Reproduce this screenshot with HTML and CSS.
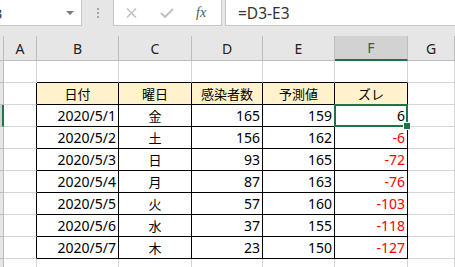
FILE: index.html
```html
<!DOCTYPE html>
<html lang="ja">
<head>
  <meta charset="UTF-8">
  <meta name="viewport" content="width=device-width, initial-scale=1.0">
  <title>感染者数の予測</title>
  <link rel="stylesheet" href="styles.css">
</head>
<body>
  <div class="fbar">
    <div class="namebox">
      <span class="name">F3</span>
      <svg class="drop" width="8" height="4" viewBox="0 0 8 4"><path d="M0 0h8L4 4z" fill="#7a7a7a"/></svg>
    </div>
    <div class="grip">
      <svg width="2" height="10" viewBox="0 0 2 10"><rect y="0" width="2" height="2" fill="#a6a6a6"/><rect y="4" width="2" height="2" fill="#a6a6a6"/><rect y="8" width="2" height="2" fill="#a6a6a6"/></svg>
    </div>
    <div class="btns">
      <svg class="ico" width="11" height="10" viewBox="0 0 11 10"><path d="M1 0.5l9 9M10 0.5l-9 9" stroke="#c2c2c2" stroke-width="1.6" fill="none"/></svg>
      <svg class="ico" width="14" height="10" viewBox="0 0 14 10"><path d="M1 5l4 4 8-8" stroke="#c2c2c2" stroke-width="2" fill="none"/></svg>
      <span class="fx">fx</span>
    </div>
    <div class="formula">=D3-E3</div>
  </div>

  <div class="sheet">
    <div class="row hdr">
      <div class="rh"></div>
      <div class="ch">A</div>
      <div class="ch">B</div>
      <div class="ch">C</div>
      <div class="ch">D</div>
      <div class="ch">E</div>
      <div class="ch on">F</div>
      <div class="ch">G</div>
    </div>

    <div class="row">
      <div class="rh"></div>
      <div class="c"></div>
      <div class="c tt"></div>
      <div class="c tt"></div>
      <div class="c tt"></div>
      <div class="c tt"></div>
      <div class="c tt"></div>
      <div class="c"></div>
    </div>

    <div class="row">
      <div class="rh"></div>
      <div class="c tl"></div>
      <div class="c t th">日付</div>
      <div class="c t th">曜日</div>
      <div class="c t th">感染者数</div>
      <div class="c t th">予測値</div>
      <div class="c t th">ズレ</div>
      <div class="c"></div>
    </div>

    <div class="row">
      <div class="rh on"></div>
      <div class="c tl"></div>
      <div class="c t num">2020/5/1</div>
      <div class="c t jp">金</div>
      <div class="c t num">165</div>
      <div class="c t num">159</div>
      <div class="c t num sel">6</div>
      <div class="c"></div>
    </div>

    <div class="row">
      <div class="rh"></div>
      <div class="c tl"></div>
      <div class="c t num">2020/5/2</div>
      <div class="c t jp">土</div>
      <div class="c t num">156</div>
      <div class="c t num">162</div>
      <div class="c t num neg">-6</div>
      <div class="c"></div>
    </div>

    <div class="row">
      <div class="rh"></div>
      <div class="c tl"></div>
      <div class="c t num">2020/5/3</div>
      <div class="c t jp">日</div>
      <div class="c t num">93</div>
      <div class="c t num">165</div>
      <div class="c t num neg">-72</div>
      <div class="c"></div>
    </div>

    <div class="row">
      <div class="rh"></div>
      <div class="c tl"></div>
      <div class="c t num">2020/5/4</div>
      <div class="c t jp">月</div>
      <div class="c t num">87</div>
      <div class="c t num">163</div>
      <div class="c t num neg">-76</div>
      <div class="c"></div>
    </div>

    <div class="row">
      <div class="rh"></div>
      <div class="c tl"></div>
      <div class="c t num">2020/5/5</div>
      <div class="c t jp">火</div>
      <div class="c t num">57</div>
      <div class="c t num">160</div>
      <div class="c t num neg">-103</div>
      <div class="c"></div>
    </div>

    <div class="row">
      <div class="rh"></div>
      <div class="c tl"></div>
      <div class="c t num">2020/5/6</div>
      <div class="c t jp">水</div>
      <div class="c t num">37</div>
      <div class="c t num">155</div>
      <div class="c t num neg">-118</div>
      <div class="c"></div>
    </div>

    <div class="row">
      <div class="rh"></div>
      <div class="c tl"></div>
      <div class="c t num">2020/5/7</div>
      <div class="c t jp">木</div>
      <div class="c t num">23</div>
      <div class="c t num">150</div>
      <div class="c t num neg">-127</div>
      <div class="c"></div>
    </div>

    <div class="row">
      <div class="rh"></div>
      <div class="c"></div>
      <div class="c"></div>
      <div class="c"></div>
      <div class="c"></div>
      <div class="c"></div>
      <div class="c"></div>
      <div class="c"></div>
    </div>
  </div>
</body>
</html>
```

FILE: styles.css
```css
body {
  margin: 0;
  width: 455px;
  height: 267px;
  overflow: hidden;
  background: #fff;
  font-family: "Noto Sans", "Noto Sans CJK JP", sans-serif;
  color: #000;
}

/* formula bar */
.fbar {
  display: flex;
  align-items: flex-start;
  height: 36px;
  background: #e6e6e6;
}

.namebox {
  box-sizing: border-box;
  width: 82px;
  height: 26px;
  background: #fff;
  border-right: 1px solid #c6c6c6;
  border-bottom: 1px solid #c6c6c6;
  display: flex;
  align-items: center;
  overflow: hidden;
}

.name {
  margin-left: -14px;
  font-size: 15px;
  color: #333;
}

.drop {
  margin-left: auto;
  margin-right: 7px;
}

.grip {
  width: 31px;
  height: 26px;
  display: flex;
  align-items: center;
  justify-content: center;
  padding-left: 1px;
  box-sizing: border-box;
}

.btns {
  box-sizing: border-box;
  width: 109px;
  height: 26px;
  background: #fff;
  border-left: 1px solid #c6c6c6;
  border-right: 1px solid #c6c6c6;
  border-bottom: 1px solid #c6c6c6;
  display: flex;
  align-items: center;
  padding-left: 12px;
  gap: 23px;
}

.fx {
  font-family: "Liberation Serif", serif;
  font-style: italic;
  font-size: 14px;
  color: #555;
  margin-left: -1px;
}

.formula {
  box-sizing: border-box;
  margin-left: 3px;
  width: 230px;
  height: 26px;
  background: #fff;
  border-left: 1px solid #c6c6c6;
  border-bottom: 1px solid #c6c6c6;
  padding-left: 12px;
  display: flex;
  align-items: center;
  font-size: 15.5px;
  color: #333;
}

/* sheet grid */
.row {
  display: grid;
  grid-template-columns: 4px 33px 82px 73px 71px 72px 73px 47px;
  height: 22px;
}

.row.hdr {
  height: 25px;
}

.row > div {
  box-sizing: border-box;
  display: flex;
  align-items: center;
  min-width: 0;
}

.rh {
  background: #e6e6e6;
  border-right: 1px solid #bdbdbd;
  border-bottom: 1px solid #bdbdbd;
}

.rh.on {
  background: #d2d2d2;
  border-right: 2px solid #217346;
}

.ch {
  justify-content: center;
  background: #e6e6e6;
  border-right: 1px solid #bdbdbd;
  border-bottom: 1px solid #bdbdbd;
  font-size: 14px;
  color: #222;
}

.ch.on {
  background: #d2d2d2;
  border-bottom: 2px solid #217346;
  color: #1f6b42;
}

.c {
  border-right: 1px solid #d4d4d4;
  border-bottom: 1px solid #d4d4d4;
  padding: 0 3px;
  font-size: 14px;
}

.tl {
  border-right-color: #000 !important;
}

.tt {
  border-bottom-color: #000 !important;
}

.t {
  border-right-color: #000;
  border-bottom-color: #000;
}

.th {
  justify-content: center;
  background: #fff2cc;
  font-size: 13px;
}

.jp {
  justify-content: center;
  font-size: 13px;
}

.num {
  justify-content: flex-end;
  padding-right: 2px;
}

.neg {
  color: #ff0000;
}

/* active cell */
.sel {
  position: relative;
  z-index: 2;
}

.sel::after {
  content: "";
  position: absolute;
  inset: -1px;
  border: 2px solid #217346;
}

.sel::before {
  content: "";
  position: absolute;
  right: -3px;
  bottom: -3px;
  width: 6px;
  height: 6px;
  background: #217346;
  box-shadow: 0 0 0 1px #fff;
  z-index: 1;
}
```
